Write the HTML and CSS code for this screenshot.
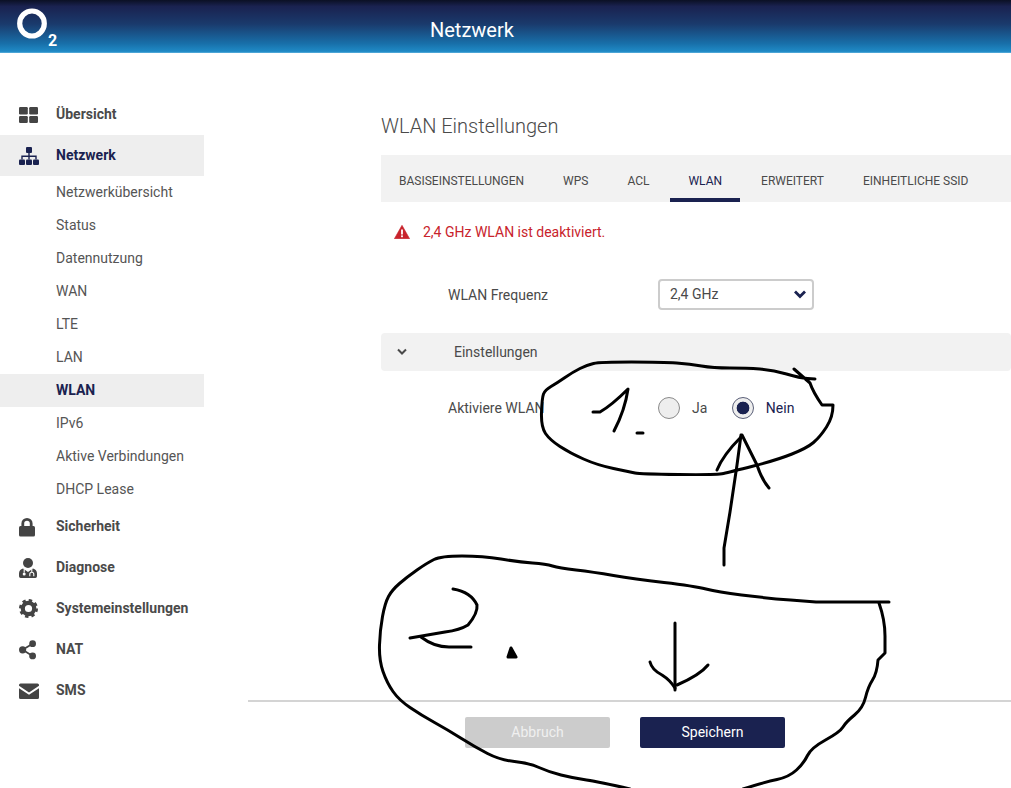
FILE: index.html
```html
<!DOCTYPE html>
<html lang="de">
<head>
<meta charset="utf-8">
<title>Netzwerk</title>
<link rel="stylesheet" href="styles.css">
</head>
<body>
<header class="topbar">
  <svg class="logo" width="50" height="53" viewBox="0 0 50 53" aria-label="O2">
    <ellipse cx="17" cy="23.500" rx="12.300" ry="12.500" fill="none" stroke="#fff" stroke-width="5.200"/>
    <text x="33" y="45.500" class="logo-sub">2</text>
  </svg>
  <h1 class="topbar-title">Netzwerk</h1>
</header>
<div class="layout">
  <nav class="sidebar">
    <a class="nav-main">
      <svg class="nav-icon" width="20" height="20" viewBox="0 0 20 20"><rect x="0" y="2" width="8.800" height="7.500" rx="1.200"/><rect x="10.200" y="2" width="8.800" height="7.500" rx="1.200"/><rect x="0" y="11" width="8.800" height="7" rx="1.200"/><rect x="10.200" y="11" width="8.800" height="7" rx="1.200"/></svg>
      <span class="nav-text">Übersicht</span>
    </a>
    <a class="nav-main is-active">
      <svg class="nav-icon" width="20" height="20" viewBox="0 0 20 20"><rect x="7" y="1" width="6" height="6" rx="1"/><rect x="0" y="13.500" width="6" height="5.500" rx="1"/><rect x="7" y="13.500" width="6" height="5.500" rx="1"/><rect x="14" y="13.500" width="6" height="5.500" rx="1"/><path d="M9.300 7h1.400v2.600H17.700v4h-1.400v-2.600H10.700v2.600H9.300v-2.600H3.700v2.600H2.300v-4h7z"/></svg>
      <span class="nav-text">Netzwerk</span>
    </a>
    <a class="nav-sub">Netzwerkübersicht</a>
    <a class="nav-sub">Status</a>
    <a class="nav-sub">Datennutzung</a>
    <a class="nav-sub">WAN</a>
    <a class="nav-sub">LTE</a>
    <a class="nav-sub">LAN</a>
    <a class="nav-sub is-current">WLAN</a>
    <a class="nav-sub">IPv6</a>
    <a class="nav-sub">Aktive Verbindungen</a>
    <a class="nav-sub">DHCP Lease</a>
    <a class="nav-main">
      <svg class="nav-icon" width="20" height="20" viewBox="0 0 20 20"><path d="M3.800 10V6.500a4.200 4.200 0 0 1 8.400 0V10" fill="none" stroke="#444" stroke-width="2.800"/><rect x="0" y="9" width="16" height="10.500" rx="1.500"/></svg>
      <span class="nav-text">Sicherheit</span>
    </a>
    <a class="nav-main">
      <svg class="nav-icon" width="20" height="20" viewBox="0 0 20 20"><circle cx="9" cy="5" r="5"/><path d="M4 10.500C1.500 11 0 13 0 15.500v2.800A1.700 1.700 0 0 0 1.700 20h14.600a1.700 1.700 0 0 0 1.700-1.700v-2.800C18 13 16.500 11 14 10.500L9 14z"/><path d="M5.200 11v3.500" stroke="#fff" stroke-width="1.100" fill="none"/><circle cx="5.200" cy="16" r="1.500" fill="#fff"/><path d="M10.800 18.200v-2a2 2 0 0 1 4 0v2M12.800 14.200V11" fill="none" stroke="#fff" stroke-width="1.100"/></svg>
      <span class="nav-text">Diagnose</span>
    </a>
    <a class="nav-main">
      <svg class="nav-icon" width="20" height="20" viewBox="0 0 20 20"><circle cx="9.500" cy="9.500" r="5.700" fill="none" stroke="#444" stroke-width="4.200"/><circle cx="9.500" cy="9.500" r="8" fill="none" stroke="#444" stroke-width="3" stroke-dasharray="3.300 2.983"/></svg>
      <span class="nav-text">Systemeinstellungen</span>
    </a>
    <a class="nav-main">
      <svg class="nav-icon" width="20" height="20" viewBox="0 0 20 20"><circle cx="13.600" cy="3.700" r="3.400"/><circle cx="3.600" cy="9.800" r="3.600"/><circle cx="13.600" cy="15.900" r="3.400"/><path d="M3.600 9.800 13.600 3.700M3.600 9.800l10 6.100" stroke="#444" stroke-width="1.800" fill="none"/></svg>
      <span class="nav-text">NAT</span>
    </a>
    <a class="nav-main">
      <svg class="nav-icon" width="20" height="20" viewBox="0 0 20 20"><path d="M1.500 2.500h17A1.500 1.500 0 0 1 20 4v.7l-10 6.800L0 4.700V4a1.500 1.500 0 0 1 1.500-1.500z"/><path d="M0 7.200l10 6.600 10-6.600v9.300a1.500 1.500 0 0 1-1.500 1.500h-17A1.500 1.500 0 0 1 0 16.500z"/></svg>
      <span class="nav-text">SMS</span>
    </a>
  </nav>
  <main class="content">
    <div class="panel">
      <h2 class="page-title">WLAN Einstellungen</h2>
      <div class="tabs">
        <a class="tab">Basiseinstellungen</a>
        <a class="tab">WPS</a>
        <a class="tab">ACL</a>
        <a class="tab is-active">WLAN</a>
        <a class="tab">Erweitert</a>
        <a class="tab">Einheitliche SSID</a>
      </div>
      <div class="alert">
        <svg width="16" height="14" viewBox="0 0 16 14"><path d="M8 .3 15.600 13.700H.4z" fill="#c8232c" stroke="#c8232c" stroke-width=".6" stroke-linejoin="round"/><rect x="7.100" y="4.500" width="1.800" height="5" fill="#fff"/><rect x="7.100" y="10.400" width="1.800" height="1.800" fill="#fff"/></svg>
        <span>2,4 GHz WLAN ist deaktiviert.</span>
      </div>
      <div class="form-row row-frequency">
        <label class="form-label">WLAN Frequenz</label>
        <div class="select">
          <span>2,4 GHz</span>
          <svg width="14" height="10" viewBox="0 0 14 10"><path d="M2 2.500 7 7.500l5-5" fill="none" stroke="#1a2250" stroke-width="2.800"/></svg>
        </div>
      </div>
      <div class="accordion">
        <svg width="12" height="8" viewBox="0 0 12 8"><path d="M2 1.500 6 5.500l4-4" fill="none" stroke="#4a4a4a" stroke-width="2"/></svg>
        <span>Einstellungen</span>
      </div>
      <div class="form-row row-activate">
        <label class="form-label">Aktiviere WLAN</label>
        <div class="radios">
          <span class="radio"><span class="radio-dot"></span><span class="radio-text">Ja</span></span>
          <span class="radio is-on"><span class="radio-dot"></span><span class="radio-text">Nein</span></span>
        </div>
      </div>
    </div>
    <footer class="actions">
      <button class="btn btn-cancel">Abbruch</button>
      <button class="btn btn-save">Speichern</button>
    </footer>
  </main>
</div>
<svg class="ink" width="1011" height="788" viewBox="0 0 1011 788">
  <path d="M815 379L807.500 378.500Q800 378 786.500 374Q773 370 760 369Q747 368 730 368Q713 368 701.500 366Q690 364 676.500 363Q663 362 631.500 362Q600 362 593.500 363.500Q587 365 580 368.500Q573 372 565 377.500Q557 383 551 386.500Q545 390 543.500 394Q542 398 541.500 412.500Q541 427 545.500 433.500Q550 440 560 446.500Q570 453 583.500 459Q597 465 613.500 468.500Q630 472 635 473Q640 474 678.500 474.500Q717 475 723.500 473.500Q730 472 753.500 466Q777 460 792 454Q807 448 813.500 442.500Q820 437 826.500 427Q833 417 833 405L822 405Q813 392 810 383L794 369"/>
  <path d="M593 412L600 412Q612 405 628 389Q625 410 614 431"/>
  <path d="M637 433 643 433"/>
  <path d="M724 565 724 548 730 512 737 465 741 435"/>
  <path d="M717 470Q723 455 741 437"/>
  <path d="M742 435 757 465Q762 480 769 488"/>
  <path d="M889 602L816 602L790.500 600Q765 598 741.500 595Q718 592 706 589Q694 586 664 582.500Q634 579 613.500 575.500Q593 572 576 570Q559 568 552.500 566Q546 564 532.500 563Q519 562 501 559Q483 556 462 556Q441 556 434 559.500Q427 563 417 570Q407 577 399.500 583.500Q392 590 388.500 596.500Q385 603 382.500 616.500Q380 630 379.500 645Q379 660 383 671.500Q387 683 393 691.500Q399 700 410 707.500Q421 715 434.500 722.500Q448 730 461.500 738.500Q475 747 487.500 753.500Q500 760 514.500 761.500Q529 763 539 767.500Q549 772 561 775Q573 778 586.500 780Q600 782 630 789"/>
  <path d="M879 603Q885 620 885 636L885 653L878 660Q877 673 872.500 680Q868 687 865.500 697.500Q863 708 854.500 715Q846 722 843 727Q840 732 825.500 740Q811 748 807.500 755.500Q804 763 796.500 770Q789 777 777 779.500Q765 782 743 789"/>
  <path d="M453 589Q471 592 477 605Q478 613 468 625Q460 630 445 632L410 638"/>
  <path d="M421 637Q434 647 449 647L471 647"/>
  <path class="ink-solid" d="M508 657 511 648 516 657Z"/>
  <path d="M675 623 675 690"/>
  <path d="M650 662Q652 670 662 675Q670 680 675 688"/>
  <path d="M708 665Q700 675 677 685"/>
</svg>
</body>
</html>
```

FILE: styles.css
```css
* {
  box-sizing: border-box;
}

html,
body {
  margin: 0;
  height: 788px;
  overflow: hidden;
}

body {
  position: relative;
  background: #fff;
  color: #4a4a4a;
  font-family: Roboto, "Liberation Sans", sans-serif;
  font-size: 14px;
}

.topbar {
  display: flex;
  align-items: flex-start;
  height: 53px;
  padding-left: 15px;
  background: linear-gradient(to bottom, #0b1024 0, #1a2250 12%, #1a3a6c 45%, #186fa9 82%, #1f8ac6 97%, #5fb0dc 100%);
}

.logo {
  flex: none;
}

.logo-sub {
  fill: #fff;
  font-family: Roboto, sans-serif;
  font-size: 16px;
  font-weight: 700;
}

.topbar-title {
  margin: 0 0 0 365px;
  color: #fff;
  font-size: 20px;
  font-weight: 400;
  line-height: 61px;
  height: 53px;
}

.layout {
  display: grid;
  grid-template-columns: 204px 1fr;
  column-gap: 44px;
  height: 735px;
}

.sidebar {
  display: flex;
  flex-direction: column;
  padding-top: 41px;
}

.nav-main {
  display: flex;
  align-items: center;
  gap: 17px;
  height: 41px;
  padding-left: 19px;
  font-weight: 700;
  color: #4a4a4a;
}

.nav-text {
  padding-bottom: 2px;
}

.nav-icon {
  flex: none;
  fill: #444;
}

.nav-main.is-active {
  background: #eeeeee;
  color: #1a2250;
}

.nav-main.is-active .nav-icon {
  fill: #1a2250;
}

.nav-sub {
  display: flex;
  align-items: center;
  height: 33px;
  padding: 0 0 2px 56px;
  color: #555;
}

.nav-sub.is-current {
  background: #eeeeee;
  color: #1a2250;
  font-weight: 700;
}

.content {
  display: flex;
  flex-direction: column;
  min-width: 0;
}

.panel {
  flex: 1;
  padding-left: 133px;
}

.page-title {
  margin: 0;
  padding-top: 60px;
  height: 102px;
  color: #4a4a4a;
  font-size: 20px;
  font-weight: 300;
  line-height: 26px;
}

.tabs {
  display: flex;
  gap: 3px;
  height: 47px;
  background: #f2f2f2;
}

.tab {
  display: flex;
  align-items: center;
  padding: 9px 18px 0;
  border-bottom: 4px solid transparent;
  color: #4a4a4a;
  font-size: 12px;
  text-transform: uppercase;
}

.tab.is-active {
  border-bottom-color: #1a2250;
  color: #1a2250;
}

.alert {
  display: flex;
  align-items: center;
  gap: 13px;
  height: 60px;
  padding-left: 13px;
  color: #c8232c;
}

.form-row {
  display: flex;
  align-items: center;
  padding-left: 67px;
}

.form-label {
  width: 210px;
  color: #4a4a4a;
}

.row-frequency {
  height: 71px;
  padding-bottom: 6px;
}

.select {
  display: flex;
  align-items: center;
  justify-content: space-between;
  width: 156px;
  height: 31px;
  padding: 0 5px 2px 10px;
  border: 2px solid #cccccc;
  border-radius: 4px;
  background: #fff;
}

.accordion {
  display: flex;
  align-items: center;
  gap: 46px;
  height: 38px;
  padding-left: 15px;
  background: #f2f2f2;
  border-radius: 4px;
}

.row-activate {
  height: 74px;
}

.radios {
  display: flex;
  gap: 24.500px;
}

.radio {
  display: flex;
  align-items: center;
  gap: 12px;
}

.radio-dot {
  display: block;
  width: 22px;
  height: 22px;
  border: 1px solid #8a8a8a;
  border-radius: 50%;
  background: #eeeeee;
}

.radio.is-on .radio-dot {
  border-color: #5a5f78;
  background: radial-gradient(circle, #1a2250 0, #1a2250 6px, #eeeeee 6.700px);
}

.radio.is-on .radio-text {
  color: #1a2250;
}

.actions {
  display: flex;
  justify-content: flex-start;
  gap: 30px;
  height: 88px;
  padding: 15px 0 0 217px;
  border-top: 2px solid #d4d4d4;
}

.btn {
  width: 145px;
  height: 31px;
  padding: 0 0 2px;
  border: 0;
  border-radius: 2px;
  color: #fff;
  font-family: inherit;
  font-size: 14px;
}

.btn-cancel {
  background: #cccccc;
  color: #f0f0f0;
}

.btn-save {
  background: #1a2250;
}

.ink {
  position: absolute;
  left: 0;
  top: 0;
  pointer-events: none;
}

.ink path {
  fill: none;
  stroke: #000;
  stroke-width: 3;
  stroke-linejoin: round;
  stroke-linecap: round;
}

.ink .ink-solid {
  fill: #000;
}
```
